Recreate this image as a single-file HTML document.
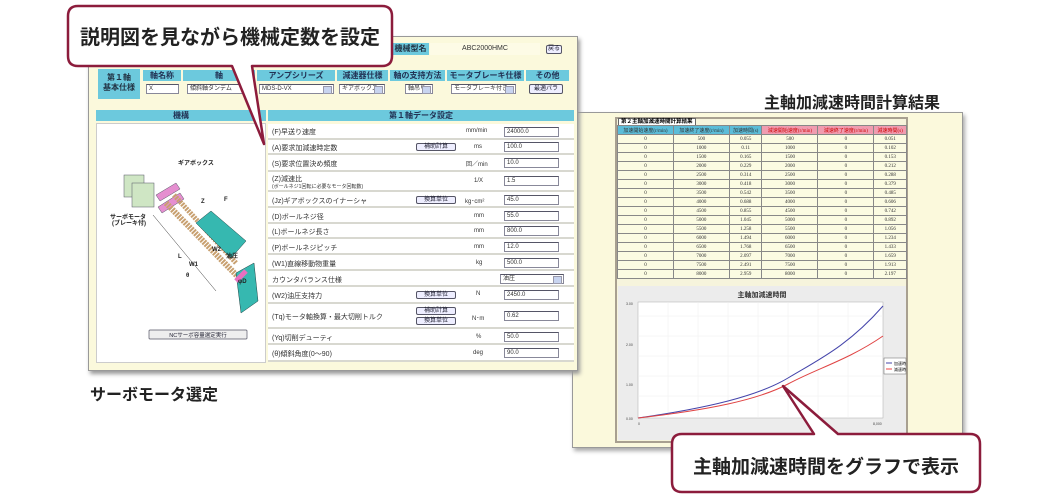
<!DOCTYPE html>
<html><head><meta charset="utf-8"><style>
*{margin:0;padding:0;box-sizing:border-box}
body{width:1050px;height:500px;background:#fff;position:relative;overflow:hidden;font-family:"Liberation Sans","Noto Sans CJK JP",sans-serif}
.a{position:absolute}
.t{font-size:7px;color:#333;white-space:nowrap}
.btn{position:absolute;border:1px solid #556;background:#eef;border-radius:2px;font-size:6px;text-align:center;line-height:7px;color:#223}
.inp{position:absolute;border:1px solid #889;border-top-color:#556;background:#fff;font-size:6px;line-height:9px;padding-left:2px;color:#333}
.sel::after{content:"";position:absolute;right:1px;top:1px;width:7px;height:6px;background:#c8d4f0;border:1px solid #99a}
.hd{position:absolute;background:#6cc9dd;color:#235;font-size:8px;font-weight:bold;text-align:center}
.row{position:absolute;left:268px;width:306px;border-bottom:2px solid #d8d8d0;background:#fff}
.tb td{border:1px solid #888;background:#fbfbe2;font-size:5px;text-align:center;height:9px;font-family:"Liberation Serif",serif;color:#333}
</style></head><body>

<div class="a" style="left:572px;top:112px;width:391px;height:336px;background:#fbf9dc;border:1px solid #999;box-shadow:2px 3px 4px #aaa"></div>
<div class="a" style="left:615px;top:117px;width:293px;height:326px;border:2px solid #a8a090;background:#f6f4dc"></div>
<div class="a" style="left:618px;top:118px;font-size:5.5px;font-weight:bold;background:#fff;border:1px solid #666;padding:0 2px;line-height:6px">第２主軸加減速時間計算結果</div>
<table class="a tb" style="left:617px;top:125px;width:290px;border-collapse:collapse">
<tr><td style="background:#5bbcd8;height:6px">加速開始速度(r/min)</td><td style="background:#5bbcd8">加速終了速度(r/min)</td><td style="background:#5bbcd8">加速時間(s)</td><td style="background:#f09cb0;color:#c00">減速開始速度(r/min)</td><td style="background:#f09cb0;color:#c00">減速終了速度(r/min)</td><td style="background:#f09cb0;color:#c00">減速時間(s)</td></tr>
<tr><td>0</td><td>500</td><td>0.055</td><td>500</td><td>0</td><td>0.051</td></tr>
<tr><td>0</td><td>1000</td><td>0.11</td><td>1000</td><td>0</td><td>0.102</td></tr>
<tr><td>0</td><td>1500</td><td>0.165</td><td>1500</td><td>0</td><td>0.153</td></tr>
<tr><td>0</td><td>2000</td><td>0.229</td><td>2000</td><td>0</td><td>0.212</td></tr>
<tr><td>0</td><td>2500</td><td>0.314</td><td>2500</td><td>0</td><td>0.288</td></tr>
<tr><td>0</td><td>3000</td><td>0.418</td><td>3000</td><td>0</td><td>0.379</td></tr>
<tr><td>0</td><td>3500</td><td>0.542</td><td>3500</td><td>0</td><td>0.485</td></tr>
<tr><td>0</td><td>4000</td><td>0.688</td><td>4000</td><td>0</td><td>0.606</td></tr>
<tr><td>0</td><td>4500</td><td>0.855</td><td>4500</td><td>0</td><td>0.742</td></tr>
<tr><td>0</td><td>5000</td><td>1.045</td><td>5000</td><td>0</td><td>0.892</td></tr>
<tr><td>0</td><td>5500</td><td>1.258</td><td>5500</td><td>0</td><td>1.056</td></tr>
<tr><td>0</td><td>6000</td><td>1.494</td><td>6000</td><td>0</td><td>1.234</td></tr>
<tr><td>0</td><td>6500</td><td>1.768</td><td>6500</td><td>0</td><td>1.433</td></tr>
<tr><td>0</td><td>7000</td><td>2.097</td><td>7000</td><td>0</td><td>1.659</td></tr>
<tr><td>0</td><td>7500</td><td>2.491</td><td>7500</td><td>0</td><td>1.913</td></tr>
<tr><td>0</td><td>8000</td><td>2.959</td><td>8000</td><td>0</td><td>2.197</td></tr>
</table>
<div class="a" style="left:618px;top:286px;width:288px;height:154px;background:#ececec"></div>
<div class="a" style="left:618px;top:290px;width:288px;text-align:center;font-size:7px;font-weight:bold;color:#333">主軸加減速時間</div>
<svg class="a" style="left:618px;top:286px" width="290" height="156">
<rect x="20" y="16" width="245" height="116" fill="#fff" stroke="#aaa" stroke-width=".5"/>
<g stroke="#eee" stroke-width=".5">
<line x1="20" y1="30" x2="265" y2="30"/><line x1="20" y1="50" x2="265" y2="50"/><line x1="20" y1="70" x2="265" y2="70"/><line x1="20" y1="90" x2="265" y2="90"/><line x1="20" y1="110" x2="265" y2="110"/>
<line x1="50" y1="16" x2="50" y2="132"/><line x1="80" y1="16" x2="80" y2="132"/><line x1="110" y1="16" x2="110" y2="132"/><line x1="140" y1="16" x2="140" y2="132"/><line x1="170" y1="16" x2="170" y2="132"/><line x1="200" y1="16" x2="200" y2="132"/><line x1="230" y1="16" x2="230" y2="132"/></g>
<path d="M20 132 C90 122 140 110 170 92 S230 60 265 20" fill="none" stroke="#4444aa" stroke-width="1"/>
<path d="M20 132 C90 124 140 114 170 98 S230 74 265 50" fill="none" stroke="#e04444" stroke-width="1"/>
<rect x="266" y="72" width="22" height="16" fill="#fff" stroke="#666" stroke-width=".5"/>
<line x1="268" y1="77" x2="274" y2="77" stroke="#44a"/><line x1="268" y1="83" x2="274" y2="83" stroke="#e44"/>
<text x="276" y="79" font-size="4">加速時</text><text x="276" y="85" font-size="4">減速時</text>
<g font-size="3.5" fill="#444"><text x="8" y="19">3.00</text><text x="8" y="60">2.00</text><text x="8" y="100">1.00</text><text x="8" y="134">0.00</text><text x="20" y="139">0</text><text x="255" y="139">8,000</text></g>
</svg>

<div class="a" style="left:88px;top:36px;width:490px;height:335px;background:#fbf9dc;border:1px solid #999;box-shadow:2px 3px 4px #999"></div>
<div class="a" style="left:392px;top:43px;width:37px;height:12px;background:#6cc9dd;font-size:8px;font-weight:bold;color:#234;line-height:12px;text-align:center">機械型名</div>
<div class="a" style="left:430px;top:43px;width:110px;height:12px;background:#fdfbe6;font-size:7px;line-height:12px;text-align:center;color:#333">ABC2000HMC</div>
<div class="btn" style="left:546px;top:45px;width:16px;height:9px">戻る</div>
<div class="a" style="left:98px;top:69px;width:42px;height:30px;background:#6cc9dd;font-size:8px;font-weight:bold;color:#234;text-align:center;line-height:10px;padding-top:4px">第１軸<br>基本仕様</div>
<div class="hd" style="left:143px;top:70px;width:38px;height:11px">軸名称</div>
<div class="hd" style="left:183px;top:70px;width:72px;height:11px">軸</div>
<div class="hd" style="left:257px;top:70px;width:78px;height:11px">アンプシリーズ</div>
<div class="hd" style="left:337px;top:70px;width:51px;height:11px">減速器仕様</div>
<div class="hd" style="left:390px;top:70px;width:55px;height:11px">軸の支持方法</div>
<div class="hd" style="left:447px;top:70px;width:77px;height:11px">モータブレーキ仕様</div>
<div class="hd" style="left:526px;top:70px;width:43px;height:11px">その他</div>
<div class="inp" style="left:146px;top:84px;width:33px;height:10px">X</div>
<div class="inp sel" style="left:187px;top:84px;width:66px;height:10px">傾斜軸タンデム</div>
<div class="inp sel" style="left:259px;top:84px;width:75px;height:10px">MDS-D-VX</div>
<div class="inp sel" style="left:339px;top:84px;width:46px;height:10px">ギアボックス</div>
<div class="inp sel" style="left:405px;top:84px;width:28px;height:10px">軸吊り</div>
<div class="inp sel" style="left:451px;top:84px;width:65px;height:10px">モータブレーキ付き</div>
<div class="btn" style="left:529px;top:84px;width:34px;height:10px;line-height:8px">最適パラ</div>

<div class="hd" style="left:96px;top:110px;width:170px;height:11px">機構</div>
<div class="hd" style="left:268px;top:110px;width:306px;height:11px">第１軸データ設定</div>
<div class="a" style="left:96px;top:123px;width:170px;height:240px;background:#fff;border:1px solid #ccc"></div>
<svg class="a" style="left:96px;top:123px" width="170" height="240">
<g fill="#cfe6c4" stroke="#556" stroke-width=".5"><rect x="28" y="52" width="20" height="22"/><rect x="36" y="60" width="22" height="24"/></g>
<g fill="#e58fd0" stroke="#556" stroke-width=".5"><polygon points="60,72 80,60 84,66 64,78"/><polygon points="62,84 84,70 88,76 66,90"/></g>
<line x1="70" y1="80" x2="148" y2="160" stroke="#c8a070" stroke-width="6" stroke-dasharray="2 1"/>
<line x1="78" y1="72" x2="140" y2="140" stroke="#c8a070" stroke-width="5" stroke-dasharray="2 1"/>
<polygon points="100,100 115,88 150,118 135,135" fill="#36b8b0" stroke="#244" stroke-width=".5"/>
<polygon points="140,150 158,140 162,178 145,190" fill="#36b8b0" stroke="#244" stroke-width=".5"/>
<line x1="140" y1="158" x2="150" y2="148" stroke="#e870c0" stroke-width="5"/>
<line x1="57" y1="92" x2="120" y2="168" stroke="#333" stroke-width=".5"/>
<g font-size="6" font-weight="bold" fill="#222"><text x="82" y="42">ギアボックス</text><text x="128" y="78">F</text><text x="116" y="128">W2</text><text x="130" y="135">油圧</text><text x="93" y="143">W1</text><text x="82" y="135">L</text><text x="105" y="80">Z</text><text x="90" y="154">θ</text><text x="142" y="160">φD</text><text x="14" y="96">サーボモータ</text><text x="16" y="102">(ブレーキ付)</text></g>
<rect x="53" y="207" width="98" height="9" fill="#eee" stroke="#556" stroke-width=".7" rx="1"/>
<text x="102" y="214" font-size="5.5" text-anchor="middle" fill="#223">NCサーボ容量選定実行</text>
</svg>

<div class="row" style="top:124px;height:16px"></div><div class="t a" style="left:272px;top:127px">(F)早送り速度</div><div class="t a" style="left:466px;top:128px;font-size:6px">mm/min</div><div class="inp" style="left:504px;top:127px;width:55px;height:10px">24000.0</div>
<div class="row" style="top:140px;height:15px"></div><div class="t a" style="left:272px;top:143px">(A)要求加減速時定数</div><div class="btn" style="left:416px;top:143px;width:40px;height:8px">補助計算</div><div class="t a" style="left:474px;top:144px;font-size:6px">ms</div><div class="inp" style="left:504px;top:142px;width:55px;height:10px">100.0</div>
<div class="row" style="top:155px;height:17px"></div><div class="t a" style="left:272px;top:159px">(S)要求位置決め頻度</div><div class="t a" style="left:466px;top:159px;font-size:6px">回／min</div><div class="inp" style="left:504px;top:158px;width:55px;height:10px">10.0</div>
<div class="row" style="top:172px;height:20px"></div><div class="t a" style="left:272px;top:174px">(Z)減速比</div><div class="t a" style="left:272px;top:183px;font-size:5px">(ボールネジ1回転に必要なモータ回転数)</div><div class="t a" style="left:474px;top:178px;font-size:6px">1/X</div><div class="inp" style="left:504px;top:176px;width:55px;height:10px">1.5</div>
<div class="row" style="top:192px;height:16px"></div><div class="t a" style="left:272px;top:196px">(Jz)ギアボックスのイナーシャ</div><div class="btn" style="left:416px;top:196px;width:40px;height:8px">換算単位</div><div class="t a" style="left:465px;top:196px;font-size:6px">kg･cm²</div><div class="inp" style="left:504px;top:195px;width:55px;height:10px">45.0</div>
<div class="row" style="top:208px;height:16px"></div><div class="t a" style="left:272px;top:212px">(D)ボールネジ径</div><div class="t a" style="left:474px;top:213px;font-size:6px">mm</div><div class="inp" style="left:504px;top:211px;width:55px;height:10px">55.0</div>
<div class="row" style="top:224px;height:15px"></div><div class="t a" style="left:272px;top:227px">(L)ボールネジ長さ</div><div class="t a" style="left:474px;top:228px;font-size:6px">mm</div><div class="inp" style="left:504px;top:226px;width:55px;height:10px">800.0</div>
<div class="row" style="top:239px;height:16px"></div><div class="t a" style="left:272px;top:243px">(P)ボールネジピッチ</div><div class="t a" style="left:474px;top:244px;font-size:6px">mm</div><div class="inp" style="left:504px;top:242px;width:55px;height:10px">12.0</div>
<div class="row" style="top:255px;height:16px"></div><div class="t a" style="left:272px;top:259px">(W1)直線移動物重量</div><div class="t a" style="left:476px;top:260px;font-size:6px">kg</div><div class="inp" style="left:504px;top:258px;width:55px;height:10px">500.0</div>
<div class="row" style="top:271px;height:16px"></div><div class="t a" style="left:272px;top:275px">カウンタバランス仕様</div><div class="inp sel" style="left:500px;top:274px;width:64px;height:10px">油圧</div>
<div class="row" style="top:287px;height:17px"></div><div class="t a" style="left:272px;top:291px">(W2)油圧支持力</div><div class="btn" style="left:416px;top:291px;width:40px;height:8px">換算単位</div><div class="t a" style="left:476px;top:291px;font-size:6px">N</div><div class="inp" style="left:504px;top:290px;width:55px;height:10px">2450.0</div>
<div class="row" style="top:304px;height:25px"></div><div class="t a" style="left:272px;top:312px">(Tq)モータ軸換算・最大切削トルク</div><div class="btn" style="left:416px;top:307px;width:40px;height:8px">補助計算</div><div class="btn" style="left:416px;top:317px;width:40px;height:8px">換算単位</div><div class="t a" style="left:472px;top:313px;font-size:6px">N･m</div><div class="inp" style="left:504px;top:311px;width:55px;height:10px">0.62</div>
<div class="row" style="top:329px;height:16px"></div><div class="t a" style="left:272px;top:333px">(Yq)切削デューティ</div><div class="t a" style="left:476px;top:334px;font-size:6px">%</div><div class="inp" style="left:504px;top:332px;width:55px;height:10px">50.0</div>
<div class="row" style="top:345px;height:17px"></div><div class="t a" style="left:272px;top:349px">(θ)傾斜角度(0〜90)</div><div class="t a" style="left:473px;top:350px;font-size:6px">deg</div><div class="inp" style="left:504px;top:348px;width:55px;height:10px">90.0</div>

<div class="a" style="left:764px;top:89px;font-size:16px;font-weight:bold;color:#222">主軸加減速時間計算結果</div>
<div class="a" style="left:90px;top:381px;font-size:16px;font-weight:bold;color:#222">サーボモータ選定</div>

<svg class="a" style="left:0;top:0" width="1050" height="500">
<path d="M78 6 H382 Q392 6 392 16 V56 Q392 66 382 66 H252 L264 144 L232 66 H78 Q68 66 68 56 V16 Q68 6 78 6 Z" fill="#fff" stroke="#8c1c3c" stroke-width="2.5" stroke-linejoin="round"/>
<path d="M682 434 H814 L783 386 L838 434 H970 Q980 434 980 444 V482 Q980 492 970 492 H682 Q672 492 672 482 V444 Q672 434 682 434 Z" fill="#fff" stroke="#8c1c3c" stroke-width="2.5" stroke-linejoin="round"/>
</svg>
<div class="a" style="left:68px;top:21px;width:324px;text-align:center;font-size:20px;font-weight:bold;color:#222">説明図を見ながら機械定数を設定</div>
<div class="a" style="left:672px;top:452px;width:308px;text-align:center;font-size:19px;font-weight:bold;color:#222">主軸加減速時間をグラフで表示</div>
</body></html>
